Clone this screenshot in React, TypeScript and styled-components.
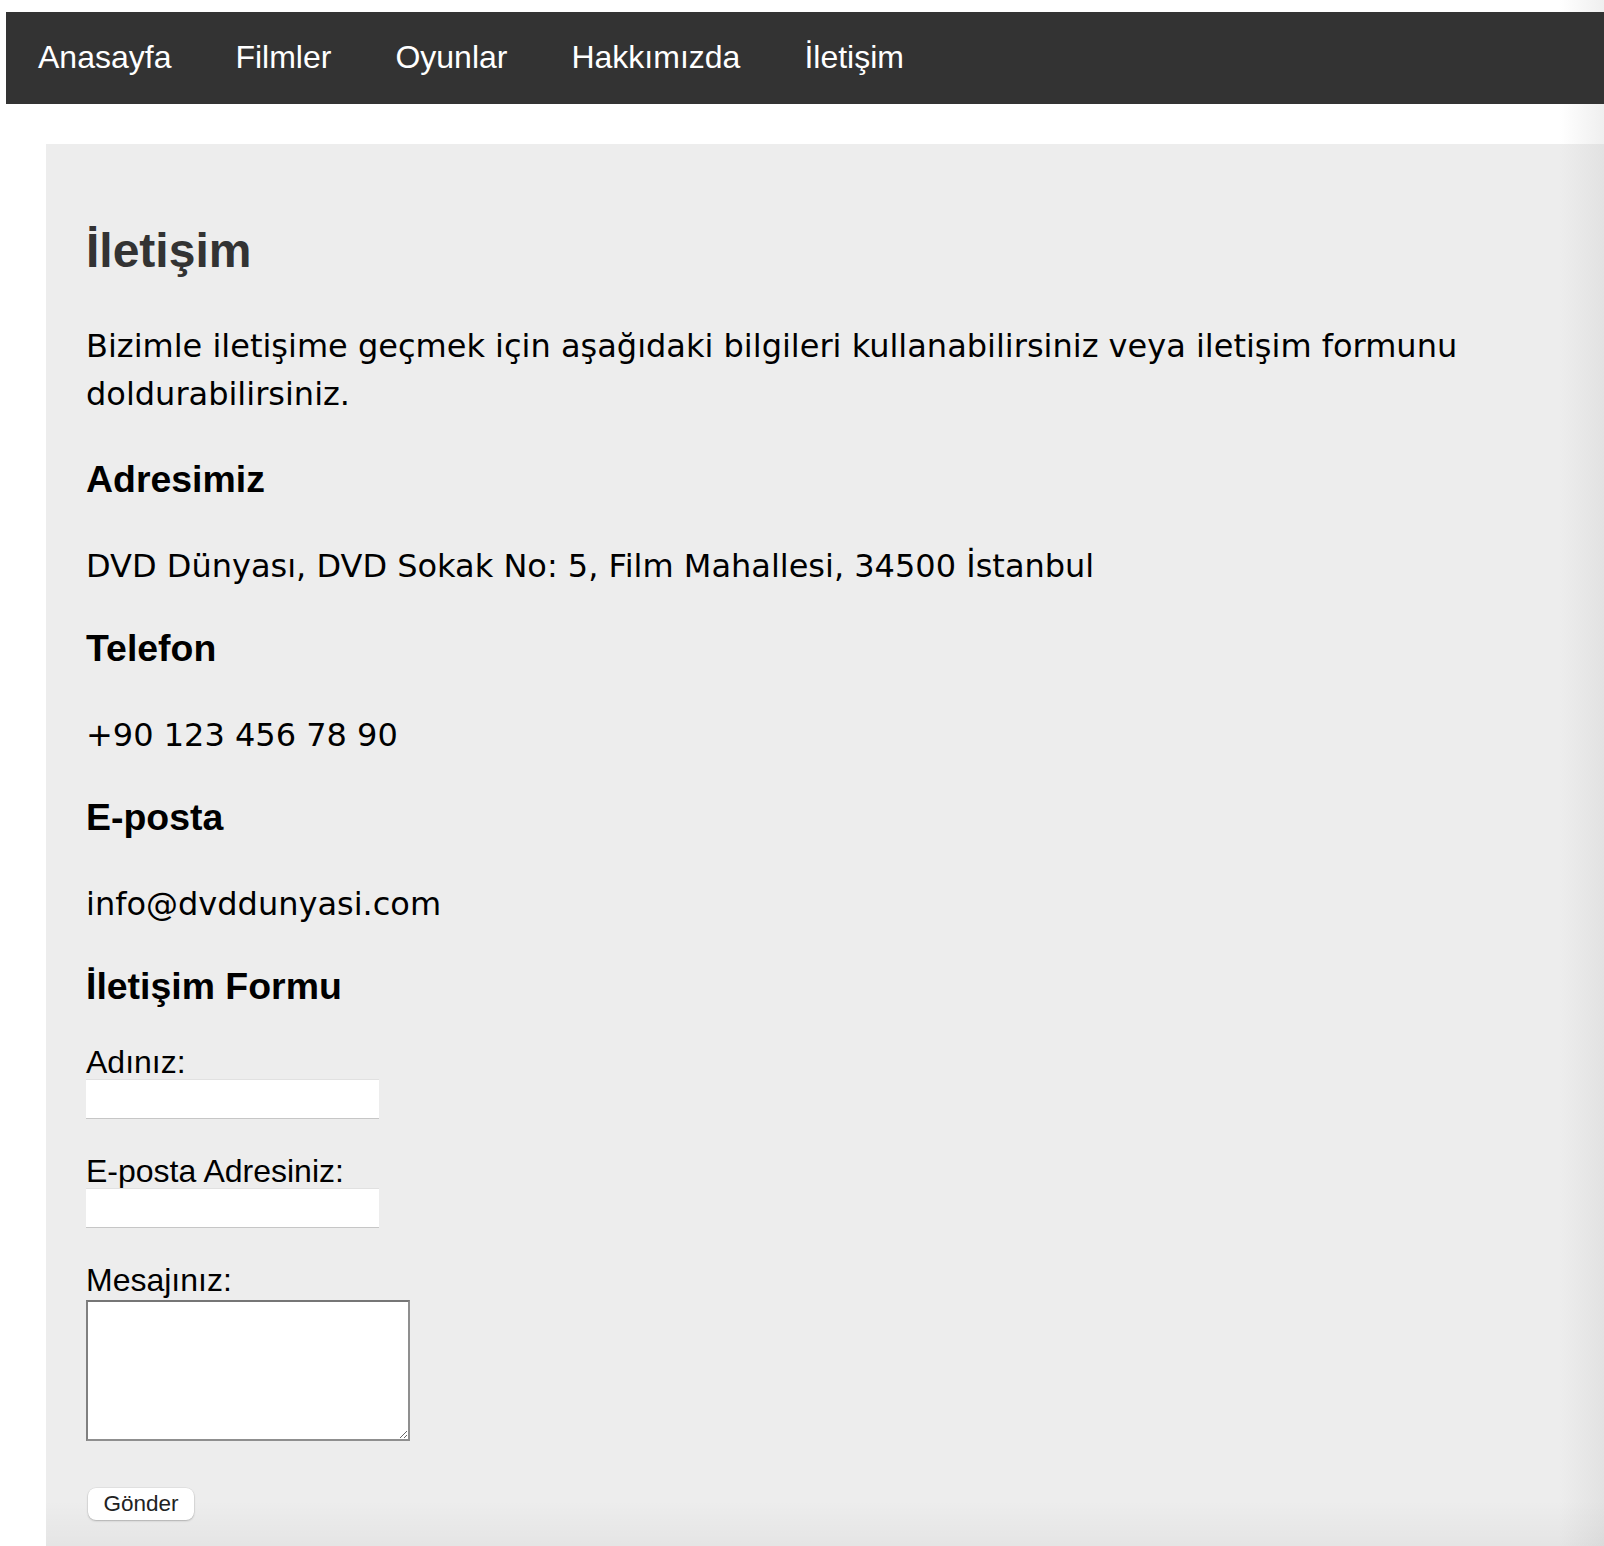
import React from "react";
import styled, { createGlobalStyle } from "styled-components";

const GlobalStyle = createGlobalStyle`
  html, body {
    margin: 0;
    padding: 0;
    background: #ffffff;
  }
  * {
    box-sizing: border-box;
  }
`;

const Page = styled.div`
  min-height: 100vh;
  display: flex;
  flex-direction: column;
  padding: 12px 0 0 6px;
  background: linear-gradient(to right, #ffffff calc(100% - 44px), #efefef 100%);
  font-family: "Liberation Sans", Arial, sans-serif;
`;

const Nav = styled.nav`
  height: 92px;
  background: #333333;
  display: flex;
  align-items: center;
  padding-bottom: 2px;
`;

const NavLink = styled.a`
  padding: 0 32px;
  color: #ffffff;
  text-decoration: none;
  font-family: "Liberation Sans", Arial, sans-serif;
  font-size: 32px;
  line-height: 37px;
`;

const Main = styled.main`
  flex: 1;
  margin: 40px 0 0 40px;
  padding: 40px 40px 20px 40px;
  background:
    linear-gradient(to bottom, rgba(0, 0, 0, 0) calc(100% - 46px), rgba(0, 0, 0, 0.035) 100%),
    linear-gradient(to right, #ededed calc(100% - 44px), #e2e2e2 100%);
`;

const Title = styled.h1`
  margin: 39px 0 43px;
  font-family: "Liberation Sans", Arial, sans-serif;
  font-weight: 700;
  font-size: 48px;
  line-height: 56px;
  color: #333333;
`;

const Text = styled.p<{ $after?: number }>`
  margin: 0 0 ${(p) => p.$after ?? 36}px;
  font-family: "DejaVu Sans", Verdana, sans-serif;
  font-size: 32px;
  line-height: 48px;
  color: #000000;
`;

const SubTitle = styled.h3<{ $after?: number }>`
  margin: 0 0 ${(p) => p.$after ?? 41}px;
  font-family: "Liberation Sans", Arial, sans-serif;
  font-weight: 700;
  font-size: 37.44px;
  line-height: 44px;
  color: #000000;
`;

const Form = styled.form`
  display: flex;
  flex-direction: column;
  align-items: flex-start;
`;

const Label = styled.label`
  display: block;
  font-family: "Liberation Sans", Arial, sans-serif;
  font-size: 32px;
  line-height: 34px;
  color: #000000;
`;

const Input = styled.input`
  width: 293px;
  height: 40px;
  margin: 0 0 35px;
  padding: 0 6px;
  background: #ffffff;
  border-style: solid;
  border-width: 1px 0;
  border-top-color: #e1e1e1;
  border-bottom-color: #c6c6c6;
  font-size: 26px;
  outline: none;
`;

const TextArea = styled.textarea`
  width: 324px;
  height: 141px;
  margin: 3px 0 47px;
  padding: 4px;
  background: #ffffff;
  border: 2px solid #8f8f8f;
  border-top-color: #767676;
  border-left-color: #808080;
  font-size: 26px;
  outline: none;
  resize: both;
`;

const SubmitButton = styled.button`
  width: 106px;
  height: 32px;
  margin-left: 2px;
  padding: 0;
  background: #ffffff;
  border: none;
  border-radius: 8px;
  box-shadow: 0 1px 2px rgba(0, 0, 0, 0.22), 0 0 0 0.5px rgba(0, 0, 0, 0.08);
  font-family: "Liberation Sans", Arial, sans-serif;
  font-size: 22.5px;
  line-height: 32px;
  color: #222222;
  cursor: pointer;
`;

const navItems = ["Anasayfa", "Filmler", "Oyunlar", "Hakkımızda", "İletişim"];

const sections = [
  { title: "Adresimiz", text: "DVD Dünyası, DVD Sokak No: 5, Film Mahallesi, 34500 İstanbul" },
  { title: "Telefon", text: "+90 123 456 78 90" },
  { title: "E-posta", text: "info@dvddunyasi.com" },
];

export default function App() {
  return (
    <>
      <GlobalStyle />
      <Page>
        <Nav>
          {navItems.map((item) => (
            <NavLink key={item} href="#">
              {item}
            </NavLink>
          ))}
        </Nav>
        <Main>
          <Title>İletişim</Title>
          <Text $after={39}>
            Bizimle iletişime geçmek için aşağıdaki bilgileri kullanabilirsiniz veya iletişim formunu
            doldurabilirsiniz.
          </Text>
          {sections.map((s) => (
            <React.Fragment key={s.title}>
              <SubTitle>{s.title}</SubTitle>
              <Text>{s.text}</Text>
            </React.Fragment>
          ))}
          <SubTitle $after={37}>İletişim Formu</SubTitle>
          <Form onSubmit={(e) => e.preventDefault()}>
            <Label htmlFor="ad">Adınız:</Label>
            <Input id="ad" type="text" />
            <Label htmlFor="eposta">E-posta Adresiniz:</Label>
            <Input id="eposta" type="email" />
            <Label htmlFor="mesaj">Mesajınız:</Label>
            <TextArea id="mesaj" />
            <SubmitButton type="submit">Gönder</SubmitButton>
          </Form>
        </Main>
      </Page>
    </>
  );
}
